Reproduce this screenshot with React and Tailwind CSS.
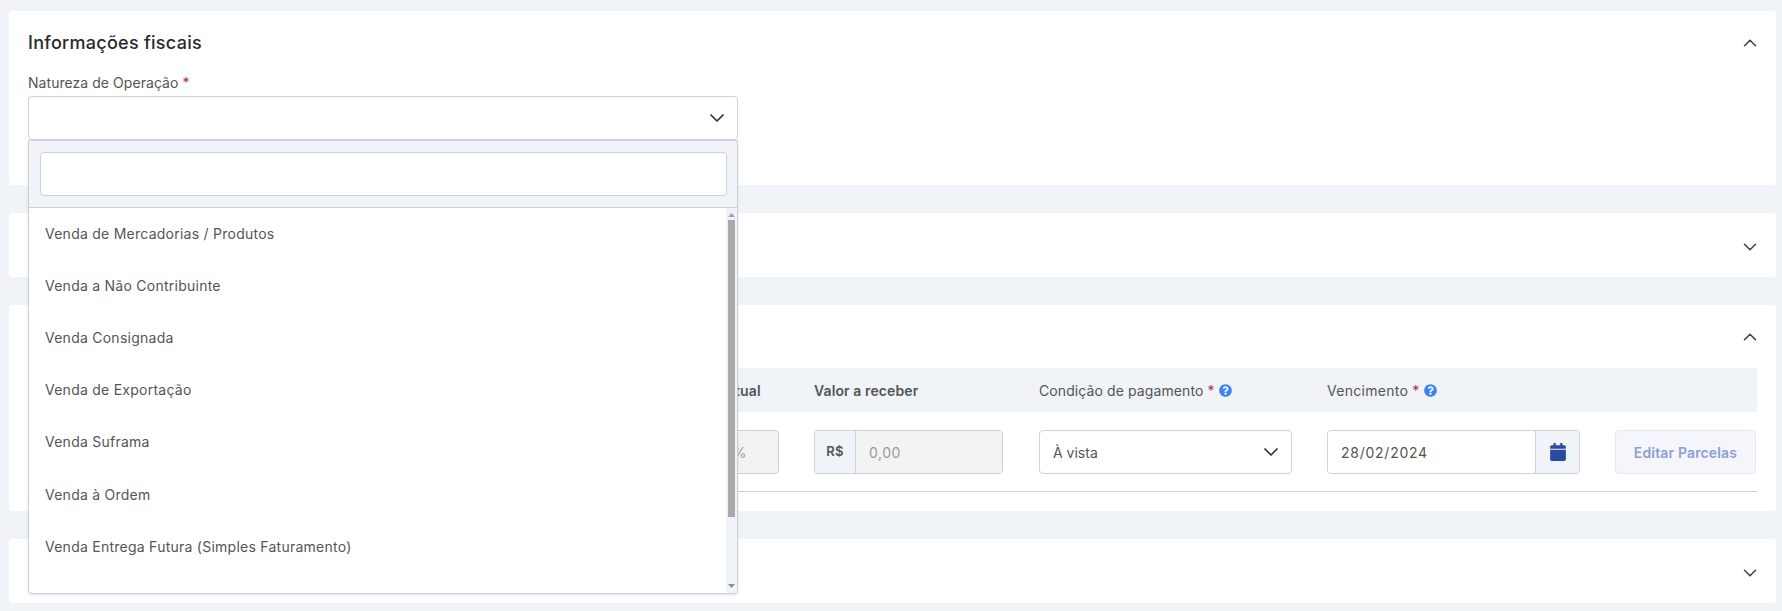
import { ChevronDown, ChevronUp } from 'lucide-react'
import { FaCalendar, FaQuestionCircle } from 'react-icons/fa'

const options = [
  'Venda de Mercadorias / Produtos',
  'Venda a Não Contribuinte',
  'Venda Consignada',
  'Venda de Exportação',
  'Venda Suframa',
  'Venda à Ordem',
  'Venda Entrega Futura (Simples Faturamento)',
]

function CardHeader({ title, open, height = 'h-16' }) {
  const Icon = open ? ChevronUp : ChevronDown
  return (
    <div className={`flex items-center justify-between pl-[19px] pr-[15px] ${height}`}>
      <h2 className="-mt-[2px] text-[18px] font-medium tracking-[0.27px] text-[#2a2a2a]">{title}</h2>
      <Icon size={22} strokeWidth={1.75} className={open ? 'text-[#444]' : 'mt-[3px] text-[#444]'} />
    </div>
  )
}

function Dropdown() {
  return (
    <div className="absolute left-0 top-[44px] z-10 w-[710px] overflow-hidden rounded-b border border-[#c9d1de] bg-white shadow-sm">
      <div className="border-b border-[#c9d1de] bg-[#f0f3f8] px-[11px] pb-[11px] pt-[11px]">
        <div className="h-[44px] w-[687px] rounded border border-[#c9d1de] bg-white" />
      </div>
      <div className="flex h-[385px]">
        <ul className="-mt-[1px] flex-1 overflow-hidden">
          {options.map((o) => (
            <li key={o} className="flex h-[52.2px] items-center pl-[16px] text-[14px] tracking-[0.25px] text-[#555]">
              {o}
            </li>
          ))}
        </ul>
        <div className="flex w-[11px] flex-col items-center bg-[#f0f3f8] py-[5px]">
          <svg width="7" height="4" viewBox="0 0 7 4" className="mb-[3px]"><path d="M3.5 0L7 4H0z" fill="#a3a3a6" /></svg>
          <div className="h-[297px] w-[7px] bg-[#a9a9ac]" />
          <svg width="7" height="4" viewBox="0 0 7 4" className="mt-auto"><path d="M0 0h7L3.5 4z" fill="#8f8f92" /></svg>
        </div>
      </div>
    </div>
  )
}

function Help() {
  return <FaQuestionCircle size={13} className="text-[#3b82f6]" />
}

function Required() {
  return <span className="text-[#a33]">*</span>
}

export default function App() {
  return (
    <div className="flex min-h-[611px] flex-col gap-7 bg-[#f0f3f8] pb-2 pl-[9px] pr-[6px] pt-[11px] font-['Inter',sans-serif]">
      <section className="relative z-10 h-[174px] rounded bg-white">
        <CardHeader title="Informações fiscais" open />
        <div className="px-[19px]">
          <label className="mb-[6px] block text-[14px] leading-[15px] tracking-[0.05px] text-[#555]">
            Natureza de Operação <Required />
          </label>
          <div className="relative">
            <div className="flex h-[44px] w-[710px] items-center justify-end rounded border border-[#c9d1de] bg-white pr-[14px]">
              <ChevronDown size={24} strokeWidth={1.75} className="-mr-[6px] text-[#333]" />
            </div>
            <Dropdown />
          </div>
        </div>
      </section>

      <section className="rounded bg-white">
        <CardHeader open={false} />
      </section>

      <section className="rounded bg-white">
        <CardHeader open height="h-[63px]" />
        <div className="mx-[19px] border-b border-[#c9d1de] pb-[17px]">
          <div className="grid h-[44px] grid-cols-[662px_124px_225px_288px_288px_141px] items-center bg-[#f0f3f8] text-[14px] tracking-[0.1px] text-[#555]">
            <div />
            <div className="-ml-[3px] font-semibold">Percentual</div>
            <div className="font-semibold">Valor a receber</div>
            <div className="flex items-center gap-1">Condição de pagamento <Required /> <Help /></div>
            <div className="flex items-center gap-1 tracking-[0.3px]">Vencimento <Required /> <Help /></div>
            <div />
          </div>
          <div className="mt-[18px] grid h-[44px] grid-cols-[662px_124px_225px_288px_288px_141px] text-[14px]">
            <div />
            <div className="flex w-[89px] items-center rounded border border-[#c9d1de] bg-[#f3f3f3] pl-2 text-[#999]">0,00 %</div>
            <div className="flex w-[189px] overflow-hidden rounded border border-[#c9d1de]">
              <div className="flex w-[41px] items-center justify-center border-r border-[#c9d1de] bg-[#f0f3f8] text-[13px] font-semibold tracking-[0.2px] text-[#555]">R$</div>
              <div className="flex flex-1 items-center bg-[#f3f3f3] px-[13px] tracking-[0.5px] text-[#999]">0,00</div>
            </div>
            <div className="flex w-[253px] items-center justify-between rounded border border-[#c9d1de] bg-white pl-[13px] pr-[11px] text-[#555]">
              À vista
              <ChevronDown size={24} strokeWidth={1.75} className="-mr-[3px] text-[#333]" />
            </div>
            <div className="flex w-[253px] overflow-hidden rounded border border-[#c9d1de]">
              <div className="flex flex-1 items-center bg-white px-[13px] tracking-[0.75px] text-[#555]">28/02/2024</div>
              <div className="flex w-[44px] items-center justify-center border-l border-[#c9d1de] bg-[#f0f3f8]">
                <FaCalendar size={18} className="text-[#2a4aa0]" />
              </div>
            </div>
            <button className="w-[141px] rounded border border-[#e4e7ee] bg-[#f5f6fb] text-[14px] font-semibold tracking-[0.15px] text-[#8a9ed6]">
              Editar Parcelas
            </button>
          </div>
        </div>
        <div className="h-[19px]" />
      </section>

      <section className="rounded bg-white">
        <CardHeader open={false} />
      </section>
    </div>
  )
}
